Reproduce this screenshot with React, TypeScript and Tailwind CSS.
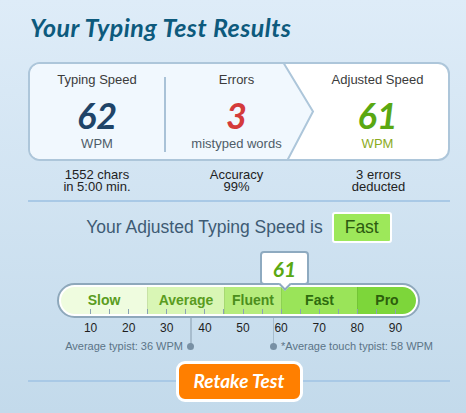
import React from "react";

const X = (w: number) => 3.81 * w - 5;

const segments = [
  { label: "Slow", w: 86, bg: "bg-[#effcdf]", fg: "text-[#5a9c1e]" },
  { label: "Average", w: 77, bg: "bg-[#d9f6b5]", fg: "text-[#5a9c1e]" },
  { label: "Fluent", w: 57, bg: "bg-[#b6ec7c]", fg: "text-[#4b8e1c]" },
  { label: "Fast", w: 76, bg: "bg-[#9ae459]", fg: "text-[#2e6b0e]" },
  { label: "Pro", w: 59, bg: "bg-[#7dd63a]", fg: "text-[#2c5e0c]" },
];

export default function App() {
  const ticks = Array.from({ length: 17 }, (_, i) => 10 + i * 5);
  const nums = [10, 20, 30, 40, 50, 60, 70, 80, 90];
  return (
    <div className="w-[466px] h-[413px] overflow-hidden bg-linear-to-b from-[#deecf8] to-[#c3daeb] pl-[28px] pr-[16px] font-['Liberation_Sans',Arial,sans-serif]">
      <div className="h-[62px] pt-[13px] pl-[2px]">
        <h1 className="font-['Lato',sans-serif] font-bold italic text-[25px] tracking-[0.45px] leading-[29px] text-[#0d5a7d]">
          Your Typing Test Results
        </h1>
      </div>

      <div className="relative h-[99px] rounded-[12px] border-2 border-[#adc6da] bg-white overflow-hidden">
        <svg className="absolute inset-0" width="418" height="95" viewBox="0 0 418 95">
          <polygon points="0,-2 253,-2 283,47.5 257,97 0,97" fill="#f1f8fe" />
          <polyline points="253,-2 283,47.5 257,97" fill="none" stroke="#adc6da" strokeWidth="2" />
        </svg>
        <div className="relative flex h-full">
          <div className="w-[134px] flex flex-col items-center pt-[8px]">
            <div className="text-[13px] leading-[15px] text-[#3b3b3b]">Typing Speed</div>
            <div className="mt-[8px] font-['Lato',sans-serif] font-bold italic text-[36px] leading-[40px] text-[#1f4468]">62</div>
            <div className="mt-[1px] text-[13px] leading-[15px] text-[#4e5c68]">WPM</div>
          </div>
          <div className="w-[2px] mt-[13px] h-[75px] bg-[#a9c2d7]" />
          <div className="w-[141px] flex flex-col items-center pt-[8px]">
            <div className="text-[13px] leading-[15px] text-[#3b3b3b]">Errors</div>
            <div className="mt-[8px] font-['Lato',sans-serif] font-bold italic text-[36px] leading-[40px] text-[#d43b3b]">3</div>
            <div className="mt-[1px] text-[13px] leading-[15px] text-[#4e5c68]">mistyped words</div>
          </div>
          <div className="flex-1 flex flex-col items-center pt-[8px]">
            <div className="text-[13px] leading-[15px] text-[#3b3b3b]">Adjusted Speed</div>
            <div className="mt-[8px] font-['Lato',sans-serif] font-bold italic text-[36px] leading-[40px] text-[#5aa812]">61</div>
            <div className="mt-[1px] text-[13px] leading-[15px] text-[#8cab1e]">WPM</div>
          </div>
        </div>
      </div>

      <div className="flex mt-[8px] pl-[2px] text-[13px] leading-[12px] text-[#222] text-center">
        <div className="w-[134px]">1552 chars<br />in 5:00 min.</div>
        <div className="w-[2px]" />
        <div className="w-[141px]">Accuracy<br />99%</div>
        <div className="flex-1">3 errors<br />deducted</div>
      </div>

      <div className="mt-[7px] h-[2px] bg-[#a9c9e6]" />

      <div className="mt-[10px] h-[31px] flex items-center justify-center gap-[9px]">
        <span className="text-[17.5px] text-[#3e5b74]">Your Adjusted Typing Speed is</span>
        <span className="w-[60px] h-[31px] flex items-center justify-center border-2 border-white bg-[#9de85a] rounded-[3px] text-[17.5px] text-[#2c5a10]">Fast</span>
      </div>

      <div className="relative mt-[40px] ml-[29px] w-[363px]">
        <div className="relative h-[35px] rounded-full border-2 border-[#8ea8bb] bg-white p-[2px]">
          <div className="relative flex h-full rounded-full overflow-hidden">
            {segments.map((s, i) => (
              <div
                key={s.label}
                className={`${s.bg} ${i > 0 ? "border-l border-[#00000014]" : ""} flex items-center justify-center font-bold text-[14px] ${s.fg}`}
                style={{ width: s.w }}
              >
                {s.label}
              </div>
            ))}
            {ticks.map((t) => (
              <div key={t} className="absolute bottom-0 w-px h-[5px] bg-[#8aa2b4]" style={{ left: X(t) - 4 }} />
            ))}
          </div>
          <div className="absolute bottom-full left-[201px] w-[49px] h-[34px] rounded-[4px] border-2 border-[#8eaac0] bg-white flex items-center justify-center">
            <span className="relative z-10 font-['Lato',sans-serif] font-bold italic text-[21px] leading-none text-[#5aa812]">61</span>
            <div className="absolute left-1/2 bottom-[-6px] w-[9px] h-[9px] -translate-x-1/2 rotate-45 bg-white border-r-2 border-b-2 border-[#8eaac0]" />
          </div>
        </div>

        <div className="absolute top-[35px] h-[28px] w-[1.5px] bg-[#a7bccd]" style={{ left: X(36) + 1 }} />
        <div className="absolute top-[35px] h-[28px] w-[1.5px] bg-[#a7bccd]" style={{ left: X(58) }} />

        <div className="relative h-[14px] mt-[3px]">
          {nums.map((n) => (
            <span key={n} className="absolute top-0 -translate-x-1/2 text-[12px] leading-[14px] text-[#1e1e1e]" style={{ left: X(n) + 0.5 }}>
              {n}
            </span>
          ))}
        </div>

        <div className="relative h-[12px] mt-[5px] text-[11px] leading-[12px] text-[#5b7487]">
          <span className="absolute top-0 right-[237px] whitespace-nowrap">Average typist: 36 WPM</span>
          <div className="absolute top-[2.5px] w-[7px] h-[7px] rounded-full bg-[#7890a4]" style={{ left: X(36) - 2.5 }} />
          <div className="absolute top-[2.5px] w-[7px] h-[7px] rounded-full bg-[#7890a4]" style={{ left: X(58) - 3 }} />
          <span className="absolute top-0 left-[224px] whitespace-nowrap">*Average touch typist: 58 WPM</span>
        </div>
      </div>

      <div className="relative mt-[9px] h-[41px] flex items-center justify-center">
        <div className="absolute left-0 right-0 top-[19px] h-[2px] bg-[#a9c9e6]" />
        <button className="relative w-[127px] h-[41px] rounded-[9px] border-[3px] border-white bg-[#ff7f00] font-['Lato',sans-serif] font-bold italic text-[19px] text-white">
          Retake Test
        </button>
      </div>
    </div>
  );
}
